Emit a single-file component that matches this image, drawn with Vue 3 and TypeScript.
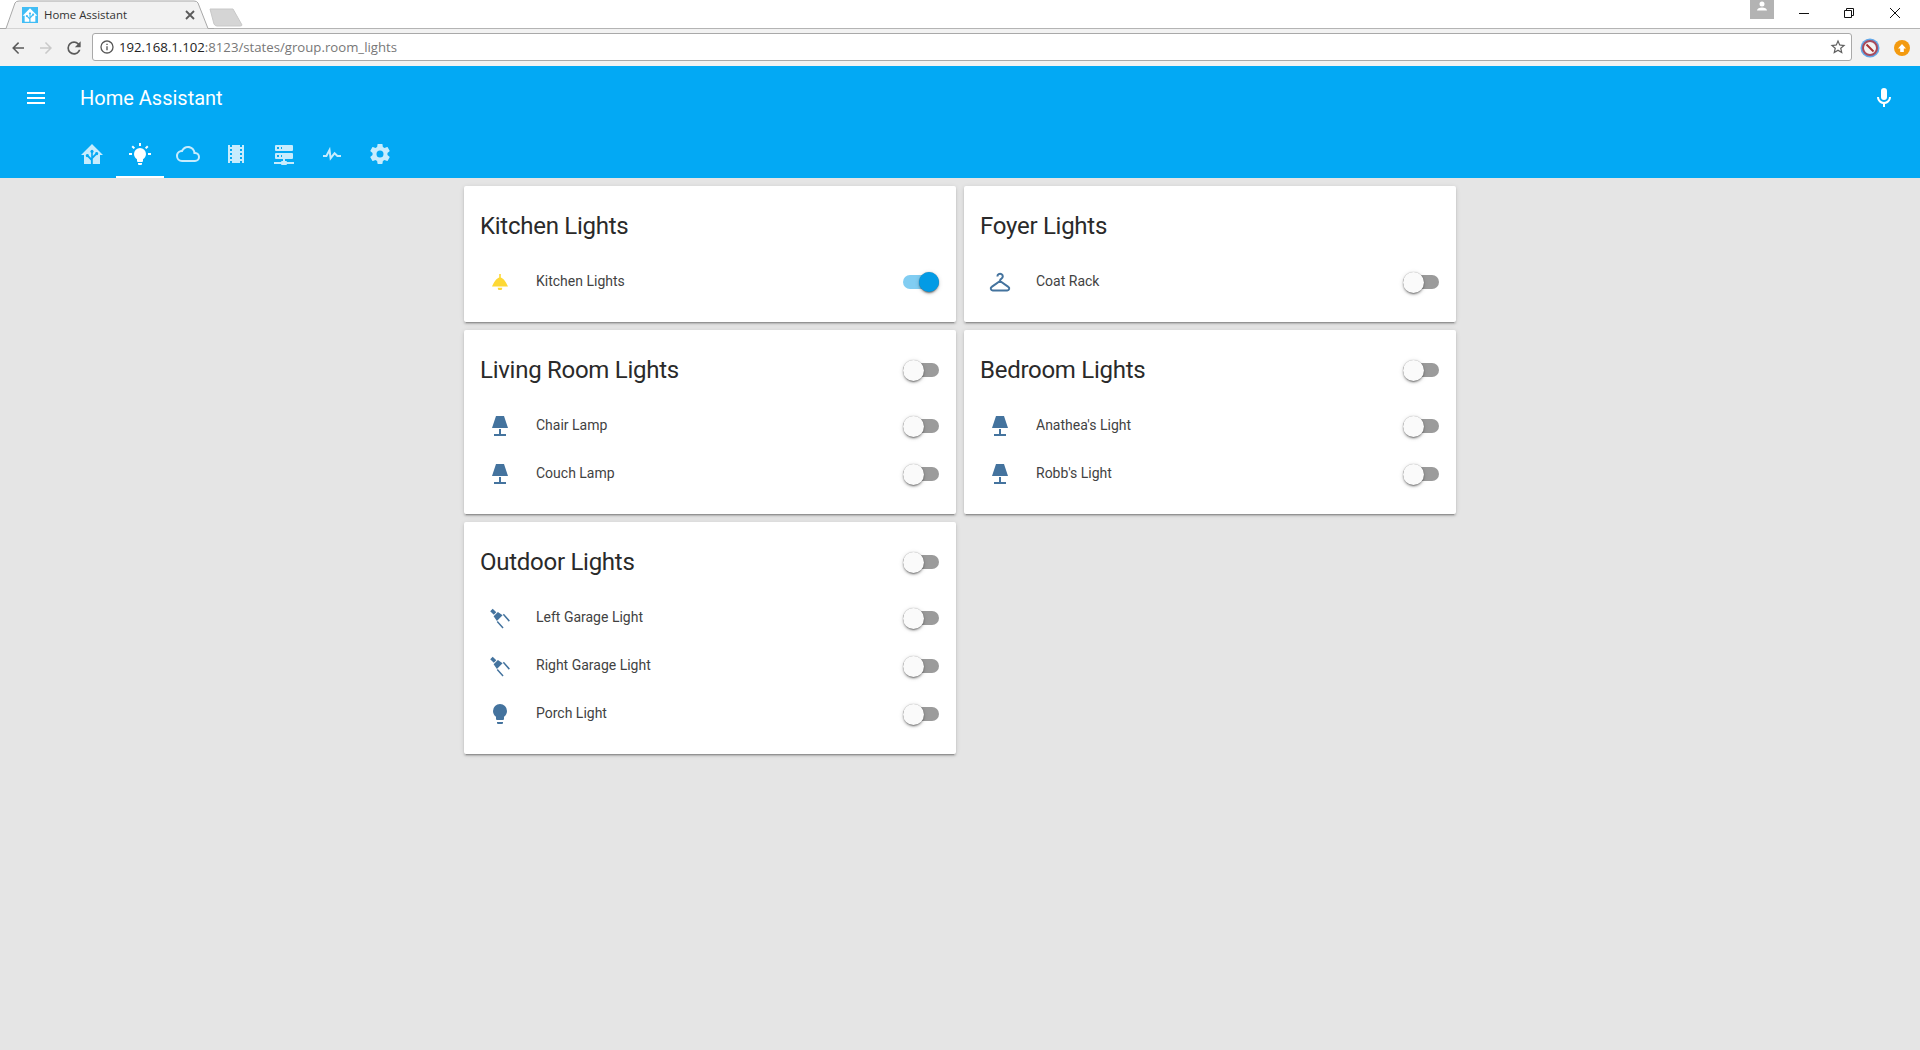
<template>
  <div class="page">
    <div class="tabstrip">
      <div class="tab">
        <svg class="tab-shape" width="214" height="29" viewBox="0 0 214 29">
          <path d="M0 28.5H6L15 3Q16 1 19 1H194Q197 1 198 3L208 28.5H214" fill="#f2f2f2" stroke="#a8a8a8" />
        </svg>
        <span class="favicon">
          <svg width="16" height="16" viewBox="0 0 24 24"><path :d="icons.home" fill="#fff" /></svg>
        </span>
        <span class="tab-title">Home Assistant</span>
        <svg class="tab-close" width="10" height="10" viewBox="0 0 10 10">
          <path d="M1 1L9 9M9 1L1 9" stroke="#5a5a5a" stroke-width="1.8" />
        </svg>
      </div>
      <svg class="new-tab" width="36" height="20" viewBox="0 0 36 20">
        <path d="M2 2H25L34 18Q34 19 32 19H9Q7 19 6 17Z" fill="#d5d5d5" stroke="#c8c8c8" />
      </svg>
      <div class="window-controls">
        <span class="avatar">
          <svg width="12" height="13" viewBox="0 0 24 26"><path d="M12 3a5 5 0 1 1 0 10a5 5 0 0 1 0-10M2 21c0-4 5-6 10-6s10 2 10 6z" fill="#fff" /></svg>
        </span>
        <svg class="win-btn" width="12" height="12" viewBox="0 0 12 12"><path d="M1 6.5H11" stroke="#111" /></svg>
        <svg class="win-btn max" width="12" height="12" viewBox="0 0 12 12"><path d="M3.5 3V1.5H10.5V8.5H8.5M1.5 3.5H8.5V10.5H1.5Z" fill="none" stroke="#111" /></svg>
        <svg class="win-btn" width="12" height="12" viewBox="0 0 12 12"><path d="M1 1L11 11M11 1L1 11" stroke="#111" /></svg>
      </div>
    </div>

    <div class="toolbar">
      <svg class="nav" width="18" height="18" viewBox="0 0 24 24"><path :d="icons.back" fill="#5a5a5a" /></svg>
      <svg class="nav fwd" width="18" height="18" viewBox="0 0 24 24"><path d="M12,4L10.59,5.41L16.17,11H4V13H16.17L10.59,18.59L12,20L20,12Z" fill="#c9c9c9" /></svg>
      <svg class="nav reload" width="20" height="20" viewBox="0 0 24 24"><path :d="icons.reload" fill="#5a5a5a" /></svg>
      <div class="omnibox">
        <svg width="16" height="16" viewBox="0 0 24 24"><path :d="icons.info" fill="#555" /></svg>
        <span class="url"><span class="url-host">192.168.1.102</span>:8123/states/group.room_lights</span>
        <svg class="star" width="18" height="18" viewBox="0 0 24 24"><path :d="icons.star" fill="#5f5f5f" /></svg>
      </div>
      <span class="ext ext-block"><svg width="10" height="10" viewBox="0 0 10 10"><path d="M1.5 1.5L8.5 8.5" stroke="#a33" stroke-width="2" /></svg></span>
      <span class="ext ext-up"><svg width="10" height="10" viewBox="0 0 10 10"><path d="M5 1L9 5.5H6.8V9H3.2V5.5H1Z" fill="#fff" /></svg></span>
    </div>

    <header class="app-header">
      <div class="app-bar">
        <svg class="bar-icon" width="24" height="24" viewBox="0 0 24 24"><path :d="icons.menu" fill="#fff" /></svg>
        <div class="app-title">Home Assistant</div>
        <svg class="bar-icon" width="24" height="24" viewBox="0 0 24 24"><path :d="icons.mic" fill="#fff" /></svg>
      </div>
      <nav class="view-tabs">
        <div v-for="(tab, i) in viewTabs" :key="i" class="view-tab" :class="{ active: i === 1 }">
          <svg width="24" height="24" viewBox="0 0 24 24"><path :d="tab" fill="currentColor" /></svg>
        </div>
      </nav>
    </header>

    <main class="cards">
      <div v-for="(col, c) in columns" :key="c" class="column">
        <section v-for="card in col" :key="card.title" class="card">
          <div class="card-head">
            <h2>{{ card.title }}</h2>
            <span v-if="card.toggle" class="toggle"><span class="thumb"></span></span>
          </div>
          <div v-for="row in card.rows" :key="row.name" class="row">
            <span class="row-icon" :class="{ lit: row.on }">
              <svg v-if="row.icon === 'hanger'" width="24" height="24" viewBox="0 0 24 24">
                <path :d="icons.hanger" fill="none" stroke="currentColor" stroke-width="2" />
              </svg>
              <svg v-else width="24" height="24" viewBox="0 0 24 24"><path :d="icons[row.icon]" fill="currentColor" /></svg>
            </span>
            <span class="row-name">{{ row.name }}</span>
            <span class="toggle" :class="{ on: row.on }"><span class="thumb"></span></span>
          </div>
        </section>
      </div>
    </main>
  </div>
</template>

<script setup lang="ts">
interface Row {
  name: string;
  icon: string;
  on?: boolean;
}

interface Card {
  title: string;
  toggle: boolean;
  rows: Row[];
}

const icons: Record<string, string> = {
  menu: 'M3,6H21V8H3V6M3,11H21V13H3V11M3,16H21V18H3V16Z',
  mic: 'M12,2A3,3 0 0,1 15,5V11A3,3 0 0,1 12,14A3,3 0 0,1 9,11V5A3,3 0 0,1 12,2M19,11C19,14.53 16.39,17.44 13,17.93V21H11V17.93C7.61,17.44 5,14.53 5,11H7A5,5 0 0,0 12,16A5,5 0 0,0 17,11H19Z',
  home: 'M12,2L1,13H4V22H10.9V18.4L7.6,15.1A1.6,1.6 0 1 1 8.9,13.8L11.2,16.1V10.9A1.6,1.6 0 1 1 12.8,10.9V14.1L15.1,11.8A1.6,1.6 0 1 1 16.4,13.1L12.8,16.7V22H20V13H23Z',
  bulbOn: 'M12,6A6,6 0 0,1 18,12C18,14.22 16.79,16.16 15,17.2V19A1,1 0 0,1 14,20H10A1,1 0 0,1 9,19V17.2C7.21,16.16 6,14.22 6,12A6,6 0 0,1 12,6M14,21V22A1,1 0 0,1 13,23H11A1,1 0 0,1 10,22V21H14M20,11H23V13H20V11M1,11H4V13H1V11M13,1V4H11V1H13M4.92,3.5L7.05,5.64L5.64,7.05L3.5,4.93L4.92,3.5M16.95,5.63L19.07,3.5L20.5,4.93L18.36,7.05L16.95,5.63Z',
  cloud: 'M19,18H6A4,4 0 0,1 2,14A4,4 0 0,1 6,10H6.71C7.37,7.69 9.5,6 12,6A5.5,5.5 0 0,1 17.5,11.5V12H19A3,3 0 0,1 22,15A3,3 0 0,1 19,18M19.35,10.03C18.67,6.59 15.64,4 12,4C9.11,4 6.6,5.64 5.35,8.03C2.34,8.36 0,10.9 0,14A6,6 0 0,0 6,20H19A5,5 0 0,0 24,15C24,12.36 21.95,10.22 19.35,10.03Z',
  film: 'M18,9H16V7H18M18,13H16V11H18M18,17H16V15H18M8,9H6V7H8M8,13H6V11H8M8,17H6V15H8M18,3V5H16V3H8V5H6V3H4V21H6V19H8V21H16V19H18V21H20V3H18Z',
  server: 'M13,19H14A1,1 0 0,1 15,20H22V22H15A1,1 0 0,1 14,23H10A1,1 0 0,1 9,22H2V20H9A1,1 0 0,1 10,19H11V17H4A1,1 0 0,1 3,16V12A1,1 0 0,1 4,11H20A1,1 0 0,1 21,12V16A1,1 0 0,1 20,17H13V19M4,3H20A1,1 0 0,1 21,4V8A1,1 0 0,1 20,9H4A1,1 0 0,1 3,8V4A1,1 0 0,1 4,3M9,7H10V5H9V7M9,15H10V13H9V15M5,5V7H7V5H5M5,13V15H7V13H5Z',
  pulse: 'M3,13H5.79L10.1,4.79L11.28,13.75L14.5,9.66L17.83,13H21V15H17L14.67,12.67L9.92,18.73L8.94,11.31L7,15H3V13Z',
  gear: 'M12,15.5A3.5,3.5 0 0,1 8.5,12A3.5,3.5 0 0,1 12,8.5A3.5,3.5 0 0,1 15.5,12A3.5,3.5 0 0,1 12,15.5M19.43,12.97C19.47,12.65 19.5,12.33 19.5,12C19.5,11.67 19.47,11.34 19.43,11L21.54,9.37C21.73,9.22 21.78,8.95 21.66,8.73L19.66,5.27C19.54,5.05 19.27,4.96 19.05,5.05L16.56,6.05C16.04,5.66 15.5,5.32 14.87,5.07L14.5,2.42C14.46,2.18 14.25,2 14,2H10C9.75,2 9.54,2.18 9.5,2.42L9.13,5.07C8.5,5.32 7.96,5.66 7.44,6.05L4.95,5.05C4.73,4.96 4.46,5.05 4.34,5.27L2.34,8.73C2.21,8.95 2.27,9.22 2.46,9.37L4.57,11C4.53,11.34 4.5,11.67 4.5,12C4.5,12.33 4.53,12.65 4.57,12.97L2.46,14.63C2.27,14.78 2.21,15.05 2.34,15.27L4.34,18.73C4.46,18.95 4.73,19.03 4.95,18.95L7.44,17.94C7.96,18.34 8.5,18.68 9.13,18.93L9.5,21.58C9.54,21.82 9.75,22 10,22H14C14.25,22 14.46,21.82 14.5,21.58L14.87,18.93C15.5,18.67 16.04,18.34 16.56,17.94L19.05,18.95C19.27,19.03 19.54,18.95 19.66,18.73L21.66,15.27C21.78,15.05 21.73,14.78 21.54,14.63L19.43,12.97Z',
  back: 'M20,11V13H8L13.5,18.5L12.08,19.92L4.16,12L12.08,4.08L13.5,5.5L8,11H20Z',
  reload: 'M17.65,6.35C16.2,4.9 14.21,4 12,4A8,8 0 0,0 4,12A8,8 0 0,0 12,20C15.73,20 18.84,17.45 19.73,14H17.65C16.83,16.33 14.61,18 12,18A6,6 0 0,1 6,12A6,6 0 0,1 12,6C13.66,6 15.14,6.69 16.22,7.78L13,11H20V4L17.65,6.35Z',
  info: 'M11,9H13V7H11M12,20C7.59,20 4,16.41 4,12C4,7.59 7.59,4 12,4C16.41,4 20,7.59 20,12C20,16.41 16.41,20 12,20M12,2A10,10 0 0,0 2,12A10,10 0 0,0 12,22A10,10 0 0,0 22,12A10,10 0 0,0 12,2M11,17H13V11H11V17Z',
  star: 'M12,15.39L8.24,17.66L9.23,13.38L5.91,10.5L10.29,10.13L12,6.09L13.71,10.13L18.09,10.5L14.77,13.38L15.76,17.66M22,9.24L14.81,8.63L12,2L9.19,8.63L2,9.24L7.45,13.97L5.82,21L12,17.27L18.18,21L16.54,13.97L22,9.24Z',
  lamp: 'M8,2H16L20,14H4L8,2M11,15H13V20H18V22H6V20H11V15Z',
  ceiling: 'M11.2,4H12.8V7.6C15.6,8.4 18.2,12.4 20,16.6H4C5.8,12.4 8.4,8.4 11.2,7.6ZM9.6,17.8H14.4L13.6,20H10.4Z',
  hanger: 'M9.4,6.4A2.7,2.7 0 1 1 13.5,8.7C12.6,9.2 12,9.8 12,11L3.7,16.9C2,18 2.8,20.4 4.7,20.4H19.3C21.2,20.4 22,18 20.3,16.9L12,11',
  spot: 'M2.2,5.2L4.7,2.7L8.3,6.3L5.8,8.8ZM5.6,10.3L9.9,6L14.6,9.3L8.9,15ZM14.8,8.8L15.9,7.7L21.9,14.6L20.8,15.7ZM8.7,16.1L9.8,15L15.6,21.4L14.5,22.5Z',
  bulb: 'M12,2A7,7 0 0,0 5,9C5,11.38 6.19,13.47 8,14.74V17A1,1 0 0,0 9,18H15A1,1 0 0,0 16,17V14.74C17.81,13.47 19,11.38 19,9A7,7 0 0,0 12,2M9,21A1,1 0 0,0 10,22H14A1,1 0 0,0 15,21V20H9V21Z',
};

const viewTabs = [icons.home, icons.bulbOn, icons.cloud, icons.film, icons.server, icons.pulse, icons.gear];

const columns: Card[][] = [
  [
    { title: 'Kitchen Lights', toggle: false, rows: [{ name: 'Kitchen Lights', icon: 'ceiling', on: true }] },
    {
      title: 'Living Room Lights',
      toggle: true,
      rows: [
        { name: 'Chair Lamp', icon: 'lamp' },
        { name: 'Couch Lamp', icon: 'lamp' },
      ],
    },
    {
      title: 'Outdoor Lights',
      toggle: true,
      rows: [
        { name: 'Left Garage Light', icon: 'spot' },
        { name: 'Right Garage Light', icon: 'spot' },
        { name: 'Porch Light', icon: 'bulb' },
      ],
    },
  ],
  [
    { title: 'Foyer Lights', toggle: false, rows: [{ name: 'Coat Rack', icon: 'hanger' }] },
    {
      title: 'Bedroom Lights',
      toggle: true,
      rows: [
        { name: "Anathea's Light", icon: 'lamp' },
        { name: "Robb's Light", icon: 'lamp' },
      ],
    },
  ],
];
</script>

<style>
html,
body {
  margin: 0;
  background: #e5e5e5;
}
</style>

<style scoped>
.page {
  height: 1050px;
  overflow: hidden;
  background: #e5e5e5;
  font-family: Roboto, "Liberation Sans", sans-serif;
}

.tabstrip {
  position: relative;
  display: flex;
  align-items: flex-start;
  height: 28px;
  background: #fff;
  border-bottom: 1px solid #b4b4b4;
}

.tab {
  position: relative;
  display: flex;
  align-items: center;
  width: 212px;
  height: 28px;
  box-sizing: border-box;
  padding: 2px 0 0 22px;
}

.tab-shape {
  position: absolute;
  top: 0;
  left: 0;
}

.favicon {
  position: relative;
  display: flex;
  width: 16px;
  height: 16px;
  background: #41bdf5;
}

.tab-title {
  position: relative;
  margin: -2px 0 0 6px;
  font-family: "Open Sans", sans-serif;
  font-size: 11.4px;
  color: #333;
}

.tab-close {
  position: relative;
  margin-left: 58px;
}

.new-tab {
  margin: 7px 0 0 -4px;
}

.window-controls {
  display: flex;
  margin-left: auto;
  margin-right: 3px;
}

.avatar {
  display: flex;
  justify-content: center;
  width: 24px;
  height: 19px;
  margin-right: 7px;
  background: #b3b3b3;
}

.win-btn {
  margin: 7px 16px 0 17px;
}

.win-btn.max {
  margin-right: 17px;
}

.toolbar {
  display: flex;
  align-items: center;
  height: 37px;
  background: #f2f2f2;
  padding-right: 10px;
}

.nav {
  margin-left: 9px;
}

.fwd {
  margin-left: 10px;
}

.reload {
  margin-left: 9px;
}

.omnibox {
  display: flex;
  flex: 1;
  align-items: center;
  height: 26px;
  margin: -1px 0 0 8px;
  padding: 0 4px 0 6px;
  background: #fff;
  border: 1px solid #a9a9a9;
  border-radius: 3px;
}

.url {
  flex: 1;
  margin-left: 4px;
  font-family: "Open Sans", sans-serif;
  font-size: 13.2px;
  color: #777;
}

.url-host {
  color: #222;
}

.ext {
  display: flex;
  align-items: center;
  justify-content: center;
  width: 16px;
  height: 16px;
  border-radius: 50%;
}

.ext-block {
  box-sizing: border-box;
  margin-left: 10px;
  background: #f3f3f3;
  border: 2px solid #a84a5c;
  box-shadow: 0 0 0 1.5px #63a8e8;
}

.ext-up {
  margin-left: 16px;
  background: #f39a0f;
}

.app-header {
  height: 112px;
  background: #03a9f4;
  color: #fff;
}

.app-bar {
  display: flex;
  align-items: center;
  height: 64px;
  padding: 0 24px;
}

.app-title {
  flex: 1;
  margin-left: 32px;
  font-size: 20px;
}

.view-tabs {
  display: flex;
  padding-left: 68px;
}

.view-tab {
  display: flex;
  align-items: center;
  justify-content: center;
  box-sizing: border-box;
  width: 48px;
  height: 48px;
  color: rgba(255, 255, 255, 0.78);
}

.view-tab.active {
  color: #fff;
  border-bottom: 2px solid #fff;
  padding-top: 2px;
}

.cards {
  display: flex;
  gap: 8px;
  width: 992px;
  margin: 0 auto;
  padding-top: 8px;
}

.column {
  display: flex;
  flex: 1;
  flex-direction: column;
  gap: 8px;
}

.card {
  padding: 8px 17px 16px 16px;
  background: #fff;
  border-radius: 2px;
  box-shadow: 0 2px 2px rgba(0, 0, 0, 0.14), 0 1px 5px rgba(0, 0, 0, 0.12), 0 3px 1px -2px rgba(0, 0, 0, 0.2);
}

.card-head {
  display: flex;
  align-items: center;
  justify-content: space-between;
  height: 64px;
}

h2 {
  margin: 0;
  font-size: 24px;
  font-weight: 400;
  letter-spacing: -0.27px;
  color: #2a2a2a;
}

.row {
  display: flex;
  align-items: center;
  height: 48px;
}

.row-icon {
  display: flex;
  justify-content: center;
  width: 40px;
  color: #44739e;
}

.row-icon.lit {
  color: #fdd835;
}

.row-name {
  flex: 1;
  margin: -2px 0 0 16px;
  font-size: 14px;
  color: #212121;
  opacity: 0.85;
}

.toggle {
  position: relative;
  display: block;
  width: 36px;
  height: 14px;
  background: #9b9b9b;
  border-radius: 8px;
}

.toggle.on {
  background: #81cdf2;
}

.thumb {
  position: absolute;
  top: -3.5px;
  left: -0.5px;
  width: 21px;
  height: 21px;
  background: #fafafa;
  border-radius: 50%;
  box-shadow: 0 0 1px rgba(0, 0, 0, 0.4), 0 3px 1px -2px rgba(0, 0, 0, 0.25), 0 2px 2px rgba(0, 0, 0, 0.2), 0 1px 5px rgba(0, 0, 0, 0.15);
}

.toggle.on .thumb {
  top: -3px;
  left: 16px;
  width: 20px;
  height: 20px;
  background: #039be5;
}
</style>
